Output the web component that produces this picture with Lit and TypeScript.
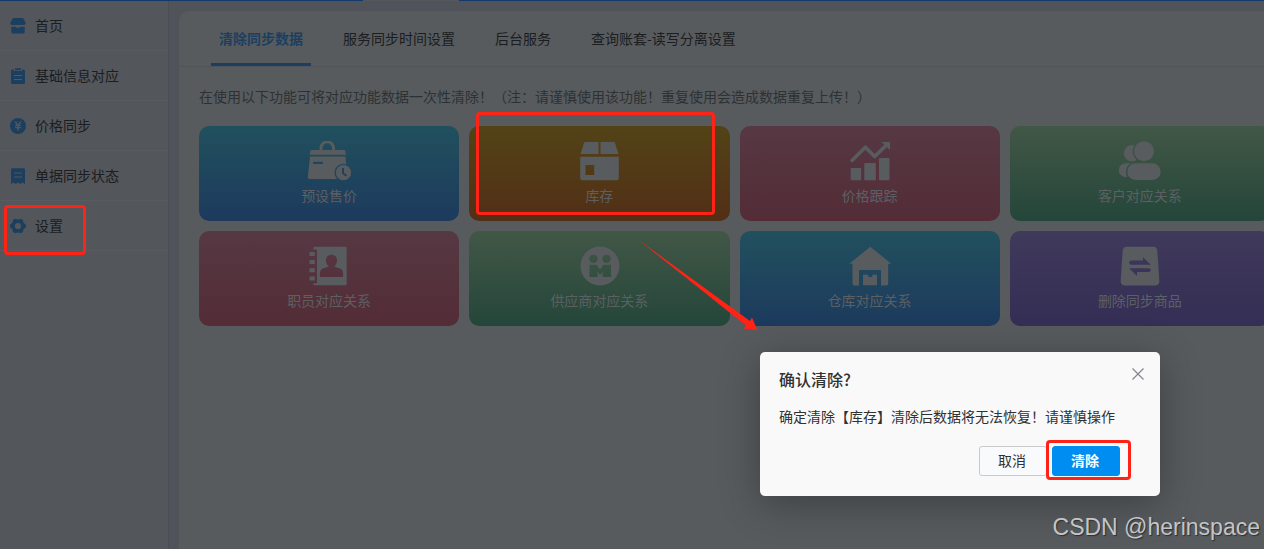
import { LitElement, html, svg, css } from "lit";
import { customElement } from "lit/decorators.js";

const menuIcons = {
  home: svg`<path d="M3 0h10l2.600 4.600q.4 2-1.200 2.400H1.600Q0 6.600.4 4.600Z"/><path d="M1.300 8.700h4q.5 1 2.700 1t2.700-1h4V14q0 1.500-1.500 1.500H2.800q-1.500 0-1.500-1.500Z"/>`,
  clipboard: svg`<path fill-rule="evenodd" d="M1 3q0-1.500 1.500-1.500H4V3h8V1.500h1.500Q15 1.500 15 3v11.500q0 1.500-1.500 1.500h-11Q1 16 1 14.500ZM4 7v1h8V7ZM4 11v1h8v-1Z"/><path d="M5 .2h6v2H5Z"/>`,
  yen: svg`<path fill-rule="evenodd" d="M8 0a8 8 0 1 0 0 16A8 8 0 0 0 8 0ZM4.500 3.500h1.800L8 6.500l1.700-3h1.800L9.500 7H11v1.100H8.800v1H11v1.100H8.800v2.300H7.200v-2.300H5V9.100h2.200v-1H5V7h1.500Z"/>`,
  receipt: svg`<path fill-rule="evenodd" d="M1 1.500Q1 .2 2.500.2h11Q15 .2 15 1.500V16l-2.300-1.500L10.300 16 8 14.500 5.700 16l-2.400-1.500L1 16ZM4 4.500v1h8v-1ZM4 8.500v1h8v-1Z"/>`,
  gear: svg`<path fill-rule="evenodd" d="M5.300.7Q8 2.200 10.700.7L13 2q0 3.200 2.900 4.600v2.800Q13 10.800 13 14l-2.300 1.300Q8 13.800 5.300 15.300L3 14Q3 10.800.1 9.400V6.600Q3 5.200 3 2ZM8 4.900a3.100 3.100 0 1 0 0 6.200 3.100 3.100 0 0 0 0-6.200Z"/>`,
};

const cardIcons = {
  bag: svg`
    <mask id="m"><rect width="46" height="40" fill="#fff"/><circle cx="36.500" cy="31.700" r="9" fill="#000"/></mask>
    <g mask="url(#m)">
      <path d="M14 10V7a6.200 6.200 0 0 1 12.500 0v3" fill="none" stroke="currentColor" stroke-width="3"/>
      <path d="M5 9h32q1.200 0 1.400 1.200L39 13.700H2.600L3.300 10.200Q3.600 9 5 9Z"/>
      <path fill-rule="evenodd" d="M3 15.500h35.500L40 36q0 2-2 2H2.500Q.6 38 .8 36ZM6 20.700V23h10v-2.300Z"/>
    </g>
    <circle cx="36.500" cy="31.700" r="7.600"/>
    <path d="M36 27v5.300l3.500 2.500" stroke="#1f4059" stroke-width="1.800" fill="none"/>`,
  box: svg`
    <path d="M8.500 1h13v12H3.500L7 2Q7.300 1 8.500 1ZM23.500 1h13q1.200 0 1.500 1l3.500 11h-18Z"/>
    <path fill-rule="evenodd" d="M3.200 15.700h38.600V37q0 2.300-2.300 2.300h-34Q3.200 39.300 3.200 37ZM8.500 24v10h8.700V24Z"/>`,
  chart: svg`
    <rect x="2.700" y="27" width="10.500" height="12.200" rx=".8"/><rect x="16.300" y="22" width="11.500" height="17.200" rx=".8"/><rect x="31" y="17" width="10.500" height="22.200" rx=".8"/>
    <path d="M4 19.500 17.300 6.200l9.400 9.300L38.500 4" fill="none" stroke="currentColor" stroke-width="3.600" stroke-linejoin="round" stroke-linecap="round"/>
    <path d="M33.500 1H42v8Z"/>`,
  people: svg`
    <mask id="p"><rect width="46" height="40" fill="#fff"/><circle cx="26" cy="10.300" r="11.300" fill="#000"/><rect x="8" y="21" width="36" height="20" rx="9.500" fill="#000"/></mask>
    <g mask="url(#p)"><circle cx="14" cy="12.300" r="8.200"/><rect x=".7" y="22.300" width="26" height="13.700" rx="6.800"/></g>
    <circle cx="26" cy="10.300" r="10"/><rect x="9.300" y="22.300" width="33.400" height="16.700" rx="8.300"/>`,
  contacts: svg`
    <path fill-rule="evenodd" d="M7.500.7h31q1.200 0 1.200 1.200v36.200q0 1.200-1.200 1.200h-31Q6.300 39.300 6.300 37.300h3.700V3.500H6.300Q6.300.7 7.500.7ZM24.500 8.700c-3.500 0-5.700 2.500-5.500 6 .2 2.800 1.500 4.500 2.800 5.600-2.300 1.300-6.500 2-8 3.600-.9 1.200-.9 4-.9 7.100h23.200c0-3.100 0-5.900-.9-7.100-1.500-1.600-5.700-2.300-8-3.600 1.300-1.100 2.600-2.800 2.800-5.600.2-3.500-2-6-5.500-6Z"/>
    <path d="M2.500 6h5.300v4H2.500ZM2.500 14h5.300v4H2.500ZM2.500 22.300h5.300v4H2.500ZM2.500 30.500h5.300v4H2.500Z"/>`,
  supplier: svg`
    <path fill-rule="evenodd" d="M23 .5a19.500 19.500 0 1 0 0 39 19.500 19.500 0 0 0 0-39ZM16.500 8.700a4.200 4.200 0 1 1 0 8.400 4.200 4.200 0 0 1 0-8.400ZM29.500 8.700a4.200 4.200 0 1 1 0 8.400 4.200 4.200 0 0 1 0-8.400ZM12.500 18.700h7l3.500 5 3.500-5h7.500V31h-8.300v-5.500L23 29 20.500 25.500V31h-8Z"/>`,
  warehouse: svg`
    <path d="M22.300.7 43.300 17.700H40.200V37.500q0 2-2 2H33V24H11v15.500H6.500q-2 0-2-2V17.700H1.300Z"/>
    <path d="M15 28.700h5.300V31h4V28.700H29v10.600H15Z"/>`,
  swap: svg`
    <path fill-rule="evenodd" d="M9 .7h26q4 0 4.300 4l2 30q.2 4.800-4.300 4.800H7q-4.500 0-4.300-4.800l2-30Q5 .7 9 .7ZM13 14.500q-1.800.3-1.800 2.100t1.800 2.100h19.800l-7.800-7.500v3.300ZM31 26q1.800-.3 1.800-1.900T31 22.200H11.200l7.800 7.800V26Z"/>`,
};

const menu = [
  ["首页", menuIcons.home],
  ["基础信息对应", menuIcons.clipboard],
  ["价格同步", menuIcons.yen],
  ["单据同步状态", menuIcons.receipt],
  ["设置", menuIcons.gear],
] as const;

const tabs = ["清除同步数据", "服务同步时间设置", "后台服务", "查询账套-读写分离设置"];

const cards = [
  ["预设售价", "blue", cardIcons.bag],
  ["库存", "orange", cardIcons.box],
  ["价格跟踪", "pink", cardIcons.chart],
  ["客户对应关系", "green", cardIcons.people],
  ["职员对应关系", "pink", cardIcons.contacts],
  ["供应商对应关系", "green", cardIcons.supplier],
  ["仓库对应关系", "blue", cardIcons.warehouse],
  ["删除同步商品", "purple", cardIcons.swap],
] as const;

@customElement("app-root")
export class AppRoot extends LitElement {
  static styles = css`
    :host {
      display: flex;
      flex-direction: column;
      position: relative;
      min-height: 100vh;
      overflow: hidden;
      background: #505359;
      color: #1b1d20;
      font: 14px/20px "Noto Sans CJK SC", sans-serif;
    }
    * { box-sizing: border-box; }
    button { font: inherit; color: inherit; border: 0; background: none; padding: 0; margin: 0; cursor: pointer; }
    a { color: inherit; text-decoration: none; }
    p, h2 { margin: 0; }

    .strip { height: 1px; background: #133a6b; }
    .strip-tab { width: 96px; height: 1px; margin-left: 363px; background: #53575c; }
    .body { display: flex; flex: 1; }

    .sidebar { width: 169px; flex: none; background: #53565b; border-right: 1px solid #4a4d52; }
    .item { display: flex; align-items: center; gap: 9px; height: 50px; padding-left: 10px; border-bottom: 1px solid #585b60; }
    .item svg { width: 16px; height: 16px; fill: #1d3f5f; }
    .item span { padding-bottom: 2px; }

    .main { flex: 1; min-width: 0; padding: 10px 0 0 10px; }
    .panel { height: 100%; margin-right: -26px; background: #575b5e; border-radius: 10px 10px 0 0; }
    .tabs { display: flex; gap: 24px; padding-left: 32px; border-bottom: 1px solid #515559; }
    .tab { height: 55px; padding: 1px 8px 0; border-bottom: 3px solid transparent; }
    .tab.active { color: #1d3f5f; font-weight: 700; border-color: #1d3f5f; }
    .content { padding: 19px 20px 20px; }
    .note { color: #2e3133; }
    .grid { display: grid; grid-template-columns: repeat(4, minmax(0, 1fr)); gap: 10px; margin-top: 20px; }
    .card { display: flex; flex-direction: column; align-items: center; gap: 4px; padding: 15px 0 16px; border-radius: 10px; color: #585c5f; }
    .card svg { width: 44px; height: 40px; fill: currentColor; overflow: visible; }
    .label { color: #5c6063; }
    .blue { background: linear-gradient(#21505d, #1d3a5d); }
    .orange { background: linear-gradient(#524316, #522f16); }
    .pink { background: linear-gradient(#563843, #532c36); }
    .green { background: linear-gradient(#425746, #24463a); }
    .purple { background: linear-gradient(#3f395b, #352e55); }

    .dialog {
      position: absolute; left: 760px; top: 352px; width: 400px; padding: 17px 20px 20px 19px;
      background: #f9f9f9; border-radius: 5px; color: #303133; box-shadow: 0 8px 40px rgba(0, 0, 0, .3);
    }
    .title { font-size: 16px; line-height: 20px; font-weight: 500; }
    .message { margin-top: 17px; }
    .close { position: absolute; right: 16px; top: 16px; width: 12px; height: 12px; }
    .close svg { display: block; width: 12px; height: 12px; stroke: #82868f; stroke-width: 1.2; fill: none; }
    .actions { display: flex; justify-content: flex-end; gap: 5px; margin-top: 20px; padding-right: 20px; }
    .btn { width: 68px; height: 30px; padding: 0 2px 2px 0; border: 1px solid #c8cacd; border-radius: 3px; background: #f9fafc; }
    .btn.primary { background: #008df2; border-color: #008df2; color: #fff; font-weight: 700; }

    .mark { position: absolute; border: 3px solid #ff2317; border-radius: 4px; pointer-events: none; }
    .mark-menu { left: 4px; top: 205px; width: 82px; height: 50px; }
    .mark-card { left: 476px; top: 112px; width: 239px; height: 103px; }
    .mark-clear { left: 1046px; top: 440px; width: 85px; height: 40px; }
    .arrow { position: absolute; left: 637px; top: 239px; width: 121px; height: 92px; fill: #ff2317; pointer-events: none; }
    .watermark {
      position: absolute; right: 4px; bottom: 8px; color: #c3c5c7;
      font: 23px/28px "Liberation Sans", Arial, sans-serif; text-shadow: 1px 1px 1px #2c2e30;
    }
  `;

  render() {
    return html`
      <div class="strip"><div class="strip-tab"></div></div>
      <div class="body">
        <nav class="sidebar">
          ${menu.map(([label, icon]) => html`<a class="item" href="#"><svg viewBox="0 0 16 16" aria-hidden="true">${icon}</svg><span>${label}</span></a>`)}
        </nav>
        <main class="main">
          <section class="panel">
            <div class="tabs" role="tablist">
              ${tabs.map((t, i) => html`<button class="tab ${i === 0 ? "active" : ""}" role="tab" aria-selected=${i === 0}>${t}</button>`)}
            </div>
            <div class="content">
              <p class="note">在使用以下功能可将对应功能数据一次性清除！（注：请谨慎使用该功能！重复使用会造成数据重复上传！）</p>
              <div class="grid">
                ${cards.map(([label, tone, icon]) => html`
                  <button class="card ${tone}"><svg viewBox="0 0 44 40" aria-hidden="true">${icon}</svg><span class="label">${label}</span></button>`)}
              </div>
            </div>
          </section>
        </main>
      </div>

      <div class="dialog" role="dialog" aria-labelledby="title">
        <h2 class="title" id="title">确认清除?</h2>
        <button class="close" aria-label="关闭"><svg viewBox="0 0 12 12"><path d="M.5.5l11 11M11.500.5l-11 11"/></svg></button>
        <p class="message">确定清除【库存】清除后数据将无法恢复！请谨慎操作</p>
        <div class="actions">
          <button class="btn">取消</button>
          <button class="btn primary">清除</button>
        </div>
      </div>

      <div class="mark mark-menu"></div>
      <div class="mark mark-card"></div>
      <div class="mark mark-clear"></div>
      <svg class="arrow" viewBox="0 0 121 92" aria-hidden="true"><path d="M1 .5 113 82 115 78.500 120.300 91 106 89.500 109.500 87Z"/></svg>
      <div class="watermark">CSDN @herinspace</div>
    `;
  }
}
